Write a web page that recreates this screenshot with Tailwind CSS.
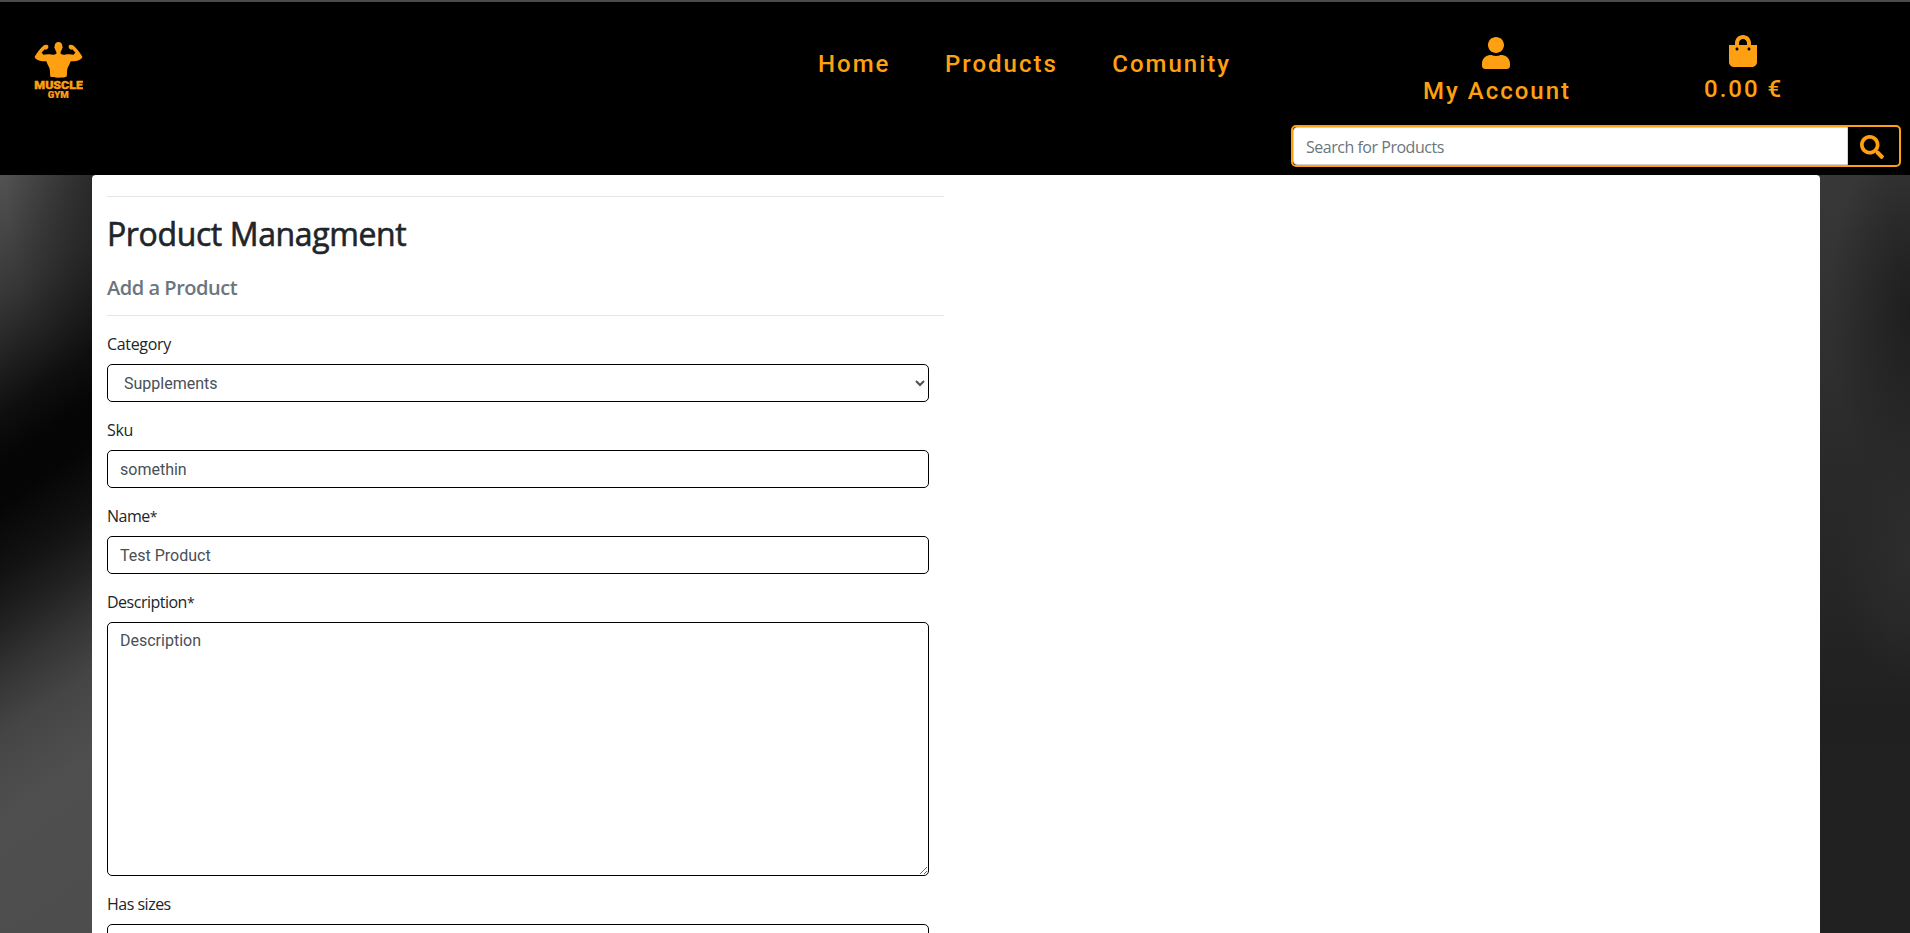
<!DOCTYPE html>
<html lang="en">
<head>
<meta charset="utf-8">
<title>Muscle Gym</title>
<script src="https://cdn.jsdelivr.net/npm/@tailwindcss/browser@4"></script>
</head>
<body class="h-screen overflow-hidden bg-black font-['Open_Sans','Noto_Sans',sans-serif] text-base text-[#212529]">
<header class="flex h-[175px] flex-col border-t-2 border-[#4a4a4a] bg-black text-[#ffa012]">
  <div class="flex h-[123px] items-start font-[Roboto,sans-serif] text-2xl font-medium tracking-[2px] whitespace-nowrap">
    <a class="ml-[34px] mt-[39px] block">
      <svg class="block h-[58px] w-[49px]" viewBox="0 0 49 58" fill="#ffa012">
        <path d="M24.500 1C27 1 28.400 2.800 28.300 5.300c.6.500.5 2-.3 2.500-.3 1.500-.8 2.400-1.400 3.100v1.800c1.500 1 3 1.300 4.800.9 3-.6 5.600-.5 8.300.1.500-.9 1-1.400 1.800-1.900L38.200 8.300c-.7.500-1.300.4-2-.1-1.100-.5-1.700-1.300-1.400-2.100-.5-1.200.2-2.200 1.500-2.300 1-.1 2.200 0 3.100.6 3.500 3.200 6.500 6.700 9.100 11.600-1.400 2.500-4.300 3.800-7.800 4.300-1.700 0-3-.2-4.200.1-.8 3-2.500 4.900-3.100 7.400-.7 2.600-.2 4.800-.7 7.700-1.900 1.600-14.500 1.600-16.400 0-.5-2.900 0-5.100-.7-7.700-.6-2.500-2.300-4.400-3.100-7.400-1.200-.3-2.500-.1-4.200-.1C4.800 19.800 1.900 18.500.5 16 3.100 11.100 6.100 7.600 9.600 4.400c.9-.6 2.100-.7 3.100-.6 1.300.1 2 1.100 1.500 2.300.3.800-.3 1.600-1.400 2.100-.7.500-1.300.6-2 .1L7.500 11.800c.8.500 1.300 1 1.800 1.900 2.700-.6 5.300-.7 8.300-.1 1.800.4 3.300.1 4.800-.9v-1.800c-.6-.7-1.100-1.600-1.400-3.100-.8-.5-.9-2-.3-2.500C20.600 2.800 22 1 24.500 1z"/>
        <text x=".3" y="48" font-family="Roboto" font-size="11.500" font-weight="900" letter-spacing="0" textLength="48.500" lengthAdjust="spacingAndGlyphs" stroke="#ffa012" stroke-width=".4">MUSCLE</text>
        <text x="13.800" y="57" font-family="Roboto" font-size="9" font-weight="900" letter-spacing="0" textLength="21" lengthAdjust="spacingAndGlyphs" stroke="#ffa012" stroke-width=".2">GYM</text>
      </svg>
    </a>
    <nav class="ml-[735px] mt-[44px] flex gap-[54.500px] leading-9">
      <a>Home</a><a>Products</a><a>Comunity</a>
    </nav>
    <a class="ml-[192px] mt-[35px] flex flex-col items-center">
      <svg class="mr-[2px] block h-8 w-7" viewBox="0 0 448 512" fill="currentColor"><path d="M224 256c70.700 0 128-57.300 128-128S294.700 0 224 0 96 57.300 96 128s57.300 128 128 128zm89.600 32h-16.700c-22.200 10.200-46.900 16-72.900 16s-50.600-5.800-72.900-16h-16.700C60.200 288 0 348.200 0 422.400V464c0 26.500 21.500 48 48 48h352c26.500 0 48-21.500 48-48v-41.600c0-74.200-60.200-134.400-134.400-134.400z"/></svg>
      <span class="mt-[4px] leading-9">My Account</span>
    </a>
    <a class="ml-[133px] mt-[33px] flex flex-col items-center">
      <svg class="mr-[2px] block h-8 w-7" viewBox="0 0 448 512" fill="currentColor"><path d="M352 160v-32C352 57.420 294.579 0 224 0 153.420 0 96 57.420 96 128v32H0v272c0 44.183 35.817 80 80 80h288c44.183 0 80-35.817 80-80V160h-96zm-192-32c0-35.290 28.710-64 64-64s64 28.710 64 64v32H160v-32zm160 120c-13.255 0-24-10.745-24-24s10.745-24 24-24 24 10.745 24 24-10.745 24-24 24zm-192 0c-13.255 0-24-10.745-24-24s10.745-24 24-24 24 10.745 24 24-10.745 24-24 24z"/></svg>
      <span class="mt-[4px] leading-9">0.00 €</span>
    </a>
  </div>
  <form class="mr-[9px] flex h-[42px] w-[610px] self-end rounded-[5px] border-2 border-[#ffa012]">
    <input type="text" placeholder="Search for Products" class="h-[38px] w-[555px] rounded-l border border-[#ced4da] bg-white px-3 pt-0.5 tracking-[-0.48px] outline-none placeholder:text-[#6c757d]">
    <button type="button" class="flex h-[38px] flex-1 items-center pl-3 pt-px">
      <svg class="h-6 w-6" viewBox="0 0 512 512" fill="currentColor"><path d="M505 442.700L405.300 343c-4.500-4.500-10.600-7-17-7H372c27.600-35.300 44-79.700 44-128C416 93.100 322.900 0 208 0S0 93.100 0 208s93.100 208 208 208c48.300 0 92.700-16.400 128-44v16.300c0 6.400 2.500 12.500 7 17l99.700 99.700c9.400 9.400 24.600 9.400 33.900 0l28.300-28.300c9.400-9.400 9.400-24.600.1-34zM208 336c-70.700 0-128-57.200-128-128 0-70.700 57.200-128 128-128 70.700 0 128 57.200 128 128 0 70.700-57.200 128-128 128z"/></svg>
    </button>
  </form>
</header>
<main class="flex h-[758px]">
  <div class="-mr-1 w-24 bg-[radial-gradient(ellipse_90px_200px_at_100%_0%,rgba(0,0,0,0.4),transparent),linear-gradient(145deg,#525252_0%,#464646_7%,#363636_15%,#202020_23%,#0f0f0f_29%,#050505_35%,#050505_40%,#121212_48.5%,#222222_55%,#343434_61%,#454545_68%,#4f4f4f_78%,#4d4d4d_100%)]"></div>
  <section class="relative w-[1728px] rounded-t-[4px] bg-white pl-[15px] pt-[21px]">
    <hr class="w-[837px] border-[#e5e5e5]">
    <h2 class="mt-[18px] text-[32px] leading-[38.400px] font-normal tracking-[-0.38px] [-webkit-text-stroke:0.6px_#212529]">Product Managment</h2>
    <h5 class="mt-[23px] text-[20px] leading-6 font-semibold tracking-[-0.46px] text-[#6c757d]">Add a Product</h5>
    <hr class="mt-[14.600px] w-[837px] border-[#e5e5e5]">
    <form class="mt-4 flex w-[822px] flex-col gap-4 tracking-[-0.34px]">
      <div class="flex flex-col gap-2"><label class="leading-6">Category</label>
        <select class="h-[38px] rounded-[5px] border border-black bg-white px-3 font-[Roboto,sans-serif] tracking-normal text-[#495057]"><option>Supplements</option></select></div>
      <div class="flex flex-col gap-2"><label class="leading-6">Sku</label>
        <input type="text" value="somethin" class="h-[38px] rounded-[5px] border border-black px-3 font-[Roboto,sans-serif] tracking-normal text-[#495057]"></div>
      <div class="flex flex-col gap-2"><label class="leading-6 tracking-[-0.5px]">Name<span class="text-sm leading-none">*</span></label>
        <input type="text" value="Test Product" class="h-[38px] rounded-[5px] border border-black px-3 font-[Roboto,sans-serif] tracking-normal text-[#495057]"></div>
      <div class="flex flex-col gap-2"><label class="leading-6 tracking-[-0.5px]">Description<span class="text-sm leading-none">*</span></label>
        <textarea class="h-[254px] rounded-[5px] border border-black px-3 py-1.5 font-[Roboto,sans-serif] leading-6 tracking-normal text-[#495057]">Description</textarea></div>
      <div class="flex flex-col gap-2"><label class="leading-6 tracking-[-0.5px]">Has sizes</label>
        <select class="h-[38px] rounded-[5px] border border-black bg-white px-3"></select></div>
    </form>
  </section>
  <div class="-ml-1 flex-1 bg-[radial-gradient(ellipse_70px_130px_at_100%_50%,#2d2d2d,transparent),radial-gradient(ellipse_80px_190px_at_100%_18%,#1e1e1e,transparent),linear-gradient(180deg,#383838_0%,#303030_22%,#292929_40%,#252525_57%,#202020_70%,#212121_100%)]"></div>
</main>
</body>
</html>
